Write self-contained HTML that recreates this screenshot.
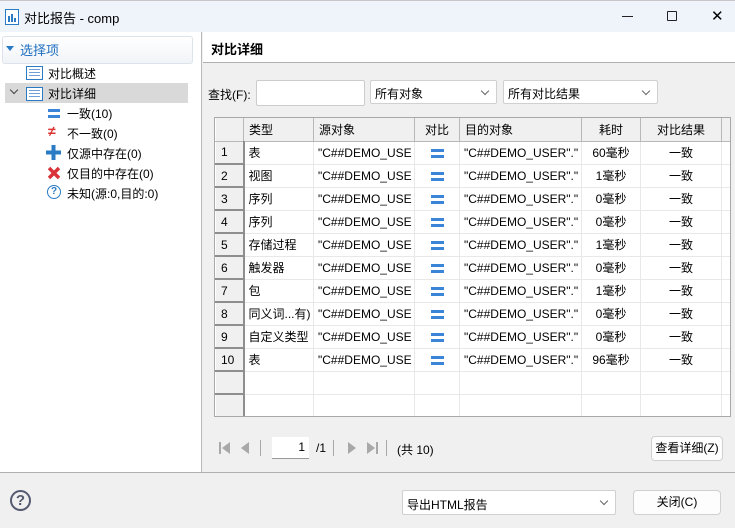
<!DOCTYPE html>
<html><head><meta charset="utf-8"><style>
*{box-sizing:border-box;margin:0;padding:0}
body{width:735px;height:528px;position:relative;overflow:hidden;background:#f0f0f0;font-family:"Liberation Sans","Noto Sans CJK SC",sans-serif;font-size:12px;color:#000}
.a{position:absolute}
.title{left:0;top:0;width:735px;height:32px;background:#eff3fa;border-top:1px solid #c8c8c8}
.left{left:0;top:32px;width:202px;height:440px;background:#fff;border-right:1px solid #b9b9b9}
.rh{left:203px;top:32px;width:532px;height:31px;background:#fff;border-bottom:1px solid #b0b0b0}
table{border-collapse:collapse;table-layout:fixed}
td{height:23px;border-right:1px solid #e8e8e8;border-bottom:1px solid #e8e8e8;white-space:nowrap;overflow:hidden;padding:0 4px;background:#fff}
th{height:23px;font-weight:normal;background:#f0f0f0;border-right:1px solid #b8b8b8;border-bottom:1px solid #b8b8b8;text-align:left;padding:0 5px}
td.n{background:#f0f0f0;border:1px solid #fff;border-right:2px solid #8e8e8e;border-bottom:2px solid #8e8e8e;padding-left:5px}
.eq{display:inline-block;width:13px;height:9px;border-top:3px solid #3a85d8;border-bottom:3px solid #3a85d8;vertical-align:middle}
.c{text-align:center}
.sel{background:#fff;border:1px solid #d0d0d0;border-radius:2px;padding:4px 4px;height:24px}
.btn{background:#fdfdfd;border:1px solid #d0d0d0;border-radius:4px;text-align:center;line-height:23px}
.chev{position:absolute;right:8px;top:7px;width:6px;height:6px;border-right:1px solid #666;border-bottom:1px solid #666;transform:rotate(45deg)}
.li{width:17px;height:14px;border:1px solid #2a7bc4;background:#fff}
.li:before{content:"";position:absolute;left:2px;top:2px;width:11px;height:8px;background:repeating-linear-gradient(#6f9fd6 0 1px,#fff 1px 3px)}
</style></head><body>
<div class="a title">
 <svg class="a" style="left:5px;top:8px" width="14" height="16"><rect x="0.5" y="0.5" width="13" height="15" fill="#fff" stroke="#2a7bc4"/><rect x="3" y="7" width="2" height="6" fill="#2a7bc4"/><rect x="6" y="5" width="2" height="8" fill="#2a7bc4"/><rect x="9" y="9" width="2" height="4" fill="#2a7bc4"/></svg>
 <div class="a" style="left:24px;top:7px;font-size:13px">对比报告 - comp</div>
 <div class="a" style="left:622px;top:15px;width:11px;height:1px;background:#222"></div>
 <div class="a" style="left:667px;top:10px;width:10px;height:10px;border:1px solid #222;border-radius:1px"></div>
 <div class="a" style="left:711px;top:8px;font-size:15px;line-height:15px">✕</div>
</div>
<div class="a left">
 <div class="a" style="left:2px;top:4px;width:191px;height:28px;border:1px solid #dde3ea;border-radius:3px;background:linear-gradient(#fff,#f1f4f8)"></div>
 <div class="a" style="left:6px;top:14px;width:0;height:0;border-left:4px solid transparent;border-right:4px solid transparent;border-top:5px solid #2a7bc4"></div>
 <div class="a" style="left:20px;top:8px;color:#1f6fc0;font-size:13px">选择项</div>
 <div class="a li" style="left:26px;top:34px"></div>
 <div class="a" style="left:48px;top:33px">对比概述</div>
 <div class="a" style="left:5px;top:51px;width:183px;height:20px;background:#d9d9d9"></div>
 <div class="a" style="left:11px;top:55px;width:6px;height:6px;border-right:1.5px solid #444;border-bottom:1.5px solid #444;transform:rotate(45deg)"></div>
 <div class="a li" style="left:26px;top:55px"></div>
 <div class="a" style="left:48px;top:53px">对比详细</div>
 <div class="a" style="left:48px;top:77px;width:12px;height:9px;border-top:3px solid #3a85d8;border-bottom:3px solid #3a85d8"></div>
 <div class="a" style="left:67px;top:73px">一致(10)</div>
 <div class="a" style="left:48px;top:91px;color:#d33;font-weight:bold;font-size:14px">≠</div>
 <div class="a" style="left:67px;top:93px">不一致(0)</div>
 <svg class="a" style="left:46px;top:113px" width="15" height="15"><rect x="5.5" y="0" width="4" height="15" fill="#2a7bc4"/><rect x="0" y="5.5" width="15" height="4" fill="#2a7bc4"/></svg>
 <div class="a" style="left:67px;top:113px">仅源中存在(0)</div>
 <svg class="a" style="left:47px;top:134px" width="14" height="14"><path d="M2 2 L12 12 M12 2 L2 12" stroke="#d8343a" stroke-width="3.5"/></svg>
 <div class="a" style="left:67px;top:133px">仅目的中存在(0)</div>
 <div class="a" style="left:47px;top:153px;width:14px;height:14px;border:1.5px solid #2a7bc4;border-radius:50%;color:#2a7bc4;font-size:10px;font-weight:bold;text-align:center;line-height:11px">?</div>
 <div class="a" style="left:67px;top:153px">未知(源:0,目的:0)</div>
</div>
<div class="a rh"><div class="a" style="left:8px;top:7px;font-weight:bold;font-size:13px">对比详细</div></div>
<div class="a" style="left:208px;top:86px">查找(F):</div>
<div class="a sel" style="left:256px;top:80px;width:109px;height:26px;border-color:#ccc"></div>
<div class="a sel" style="left:370px;top:80px;width:127px">所有对象<span class="chev"></span></div>
<div class="a sel" style="left:503px;top:80px;width:155px">所有对比结果<span class="chev"></span></div>
<div class="a" style="left:214px;top:117px;width:517px;height:300px;border:1px solid #a8a8a8;background:#fff;overflow:hidden">
<table style="width:517px">
<colgroup><col style="width:28px"><col style="width:70px"><col style="width:101px"><col style="width:45px"><col style="width:122px"><col style="width:59px"><col style="width:81px"><col style="width:11px"></colgroup>
<tr><th></th><th>类型</th><th>源对象</th><th class="c">对比</th><th>目的对象</th><th class="c">耗时</th><th class="c">对比结果</th><th></th></tr>
<tr><td class="n">1</td><td>表</td><td>"C##DEMO_USE</td><td class="c"><span class="eq"></span></td><td>"C##DEMO_USER"."</td><td class="c">60毫秒</td><td class="c">一致</td><td></td></tr>
<tr><td class="n">2</td><td>视图</td><td>"C##DEMO_USE</td><td class="c"><span class="eq"></span></td><td>"C##DEMO_USER"."</td><td class="c">1毫秒</td><td class="c">一致</td><td></td></tr>
<tr><td class="n">3</td><td>序列</td><td>"C##DEMO_USE</td><td class="c"><span class="eq"></span></td><td>"C##DEMO_USER"."</td><td class="c">0毫秒</td><td class="c">一致</td><td></td></tr>
<tr><td class="n">4</td><td>序列</td><td>"C##DEMO_USE</td><td class="c"><span class="eq"></span></td><td>"C##DEMO_USER"."</td><td class="c">0毫秒</td><td class="c">一致</td><td></td></tr>
<tr><td class="n">5</td><td>存储过程</td><td>"C##DEMO_USE</td><td class="c"><span class="eq"></span></td><td>"C##DEMO_USER"."</td><td class="c">1毫秒</td><td class="c">一致</td><td></td></tr>
<tr><td class="n">6</td><td>触发器</td><td>"C##DEMO_USE</td><td class="c"><span class="eq"></span></td><td>"C##DEMO_USER"."</td><td class="c">0毫秒</td><td class="c">一致</td><td></td></tr>
<tr><td class="n">7</td><td>包</td><td>"C##DEMO_USE</td><td class="c"><span class="eq"></span></td><td>"C##DEMO_USER"."</td><td class="c">1毫秒</td><td class="c">一致</td><td></td></tr>
<tr><td class="n">8</td><td>同义词...有)</td><td>"C##DEMO_USE</td><td class="c"><span class="eq"></span></td><td>"C##DEMO_USER"."</td><td class="c">0毫秒</td><td class="c">一致</td><td></td></tr>
<tr><td class="n">9</td><td>自定义类型</td><td>"C##DEMO_USE</td><td class="c"><span class="eq"></span></td><td>"C##DEMO_USER"."</td><td class="c">0毫秒</td><td class="c">一致</td><td></td></tr>
<tr><td class="n">10</td><td>表</td><td>"C##DEMO_USE</td><td class="c"><span class="eq"></span></td><td>"C##DEMO_USER"."</td><td class="c">96毫秒</td><td class="c">一致</td><td></td></tr>
<tr><td class="n"></td><td></td><td></td><td></td><td></td><td></td><td></td><td></td></tr>
<tr><td class="n"></td><td></td><td></td><td></td><td></td><td></td><td></td><td></td></tr>
<tr><td class="n"></td><td></td><td></td><td></td><td></td><td></td><td></td><td></td></tr>
</table></div>
<svg class="a" style="left:218px;top:440px" width="170" height="16">
<rect x="1" y="2" width="2" height="12" fill="#a8a8a8"/><path d="M12 2 L4 8 L12 14Z" fill="#a8a8a8"/>
<path d="M31 2 L23 8 L31 14Z" fill="#a8a8a8"/><rect x="42" y="0" width="1" height="16" fill="#a8a8a8"/>
<rect x="115" y="0" width="1" height="16" fill="#a8a8a8"/><path d="M130 2 L138 8 L130 14Z" fill="#a8a8a8"/>
<path d="M149 2 L157 8 L149 14Z" fill="#a8a8a8"/><rect x="158" y="2" width="2" height="12" fill="#a8a8a8"/>
<rect x="168" y="0" width="1" height="16" fill="#a8a8a8"/></svg>
<div class="a" style="left:272px;top:437px;width:37px;height:22px;background:#fff;border-bottom:1px solid #999;text-align:right;padding:3px 4px 0 0">1</div>
<div class="a" style="left:316px;top:441px">/1</div>
<div class="a" style="left:397px;top:441px">(共 10)</div>
<div class="a btn" style="left:651px;top:436px;width:72px;height:25px">查看详细(Z)</div>
<div class="a" style="left:0;top:472px;width:735px;height:1px;background:#b0b0b0"></div>
<div class="a" style="left:10px;top:490px;width:21px;height:21px;border:2px solid #555a70;border-radius:50%;color:#555a70;font-weight:bold;font-size:15px;text-align:center;line-height:17px">?</div>
<div class="a sel" style="left:402px;top:490px;width:214px;height:25px;padding-top:5px">导出HTML报告<span class="chev"></span></div>
<div class="a btn" style="left:633px;top:490px;width:88px;height:25px">关闭(C)</div>
</body></html>
